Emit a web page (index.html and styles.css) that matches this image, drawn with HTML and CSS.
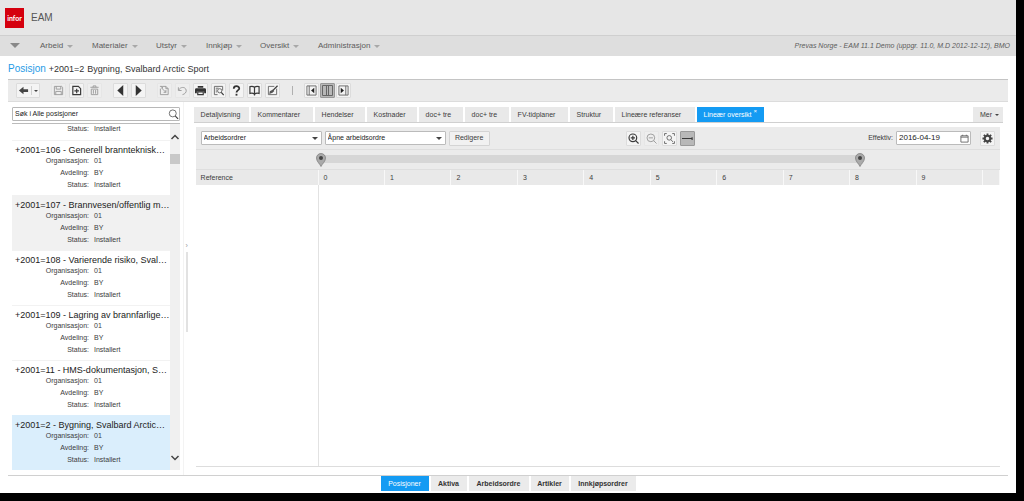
FILE: index.html
```html
<!DOCTYPE html>
<html lang="no">
<head>
<meta charset="utf-8">
<title>Infor EAM - Posisjon</title>
<link rel="stylesheet" href="styles.css">
</head>
<body>
<div class="app">
  <header class="brand"><span class="logo">infor</span><span class="product">EAM</span></header>
  <nav class="menu">
    <button class="menu-home" aria-label="Meny"><i class="caret caret-big"></i></button>
    <button class="menu-item m1">Arbeid<i class="caret"></i></button>
    <button class="menu-item m2">Materialer<i class="caret"></i></button>
    <button class="menu-item m3">Utstyr<i class="caret"></i></button>
    <button class="menu-item m4">Innkjøp<i class="caret"></i></button>
    <button class="menu-item m5">Oversikt<i class="caret"></i></button>
    <button class="menu-item m6">Administrasjon<i class="caret"></i></button>
    <span class="session">Prevas Norge - EAM 11.1 Demo (uppgr. 11.0, M.D 2012-12-12), BMO</span>
  </nav>
  <div class="heading"><h1>Posisjon</h1><span class="code">+2001=2</span><span>Bygning, Svalbard Arctic Sport</span></div>
  <div class="toolbar">
    <button class="tool back" aria-label="Tilbake"><svg class="ico" viewBox="0 0 12 12"><path d="M1 6l5-4v2.500h5v3H6V10z" fill="#444"/></svg><i class="split"></i><i class="caret caret-dark"></i></button>
    <div class="group">
      <button class="tool off" aria-label="Lagre"><svg class="ico" viewBox="0 0 12 12"><path d="M1.500 1.500h8l1 1v8h-9zM3.500 1.500v3h5v-3M3 10.500V7h6v3.500" class="ln"/></svg></button>
      <button class="tool" aria-label="Ny"><svg class="ico" viewBox="0 0 12 12"><path d="M2 1.500h6l2.500 2.500v6.500H2z" class="ln bold"/><path d="M6.200 4v5M3.700 6.500h5" class="ln bold"/></svg></button>
      <button class="tool off" aria-label="Slett"><svg class="ico" viewBox="0 0 12 12"><path d="M1.500 2.500h9M4.500 2.500v-1.500h3v1.500M2.500 4.500h7v6h-7zM4.800 5.500v4M7.200 5.500v4" class="ln"/></svg></button>
    </div>
    <div class="group">
      <button class="tool" aria-label="Forrige"><svg class="ico" viewBox="0 0 12 12"><path d="M9 0v12L2.500 6z" fill="#333"/></svg></button>
      <button class="tool" aria-label="Neste"><svg class="ico" viewBox="0 0 12 12"><path d="M3 0v12l6.500-6z" fill="#333"/></svg></button>
    </div>
    <div class="group">
      <button class="tool off" aria-label="Kopier"><svg class="ico" viewBox="0 0 12 12"><path d="M1.500 4V10.500h8.500V4L7.500 1.500H4M7.500 1.500V4H10M1 1.500h2.500V4M3.500 1.500l0 2.500 4 4M7.500 5.500V8H5" class="ln"/></svg></button>
      <button class="tool off" aria-label="Angre"><svg class="ico" viewBox="0 0 12 12"><path d="M1.500 2.500v3.500H5M1.800 5.500C3.500 2 9 1.500 10 5.500c.5 2.500-1.500 4.500-4 5" class="ln"/></svg></button>
      <button class="tool" aria-label="Skriv ut"><svg class="ico" viewBox="0 0 12 12"><path d="M3 1h6v2H3zM1.500 3.500h9Q12 3.500 12 5v4h-2V7H2v2H0V5Q0 3.500 1.500 3.500z" fill="#333"/><path d="M3 7.500h6v3H3z" class="ln bold"/></svg></button>
      <button class="tool" aria-label="Forhåndsvis"><svg class="ico" viewBox="0 0 12 12"><path d="M5 10.500H1.500v-9h9V6M3 3.500h3M3 5.500h1.500M3 7.500h1.500" class="ln mid"/><circle cx="7.300" cy="6.300" r="2.300" class="ln mid"/><path d="M9 8l2.700 3" class="ln bold"/></svg></button>
      <button class="tool" aria-label="Hjelp"><svg class="ico" viewBox="0 0 12 12"><path d="M3 4C3 .5 9 .5 9 3.700 9 5.700 6 5.500 6 8.300" fill="none" stroke="#333" stroke-width="1.900"/><path d="M5 9.600h2v2H5z" fill="#333"/></svg></button>
      <button class="tool" aria-label="Dokumentasjon"><svg class="ico" viewBox="0 0 12 12"><path d="M6 2.500C4.500 1.200 2.500 1.300 1 1.800v7.500c1.500-.5 3.500-.5 5 .7 1.500-1.200 3.500-1.200 5-.7V1.800C9.500 1.300 7.500 1.200 6 2.500zV11.500" class="ln bold"/></svg></button>
      <button class="tool" aria-label="Rediger skjerm"><svg class="ico" viewBox="0 0 12 12"><path d="M8 1.500H1.500v9h9V4" class="ln mid"/><path d="M11.500.8L6 6.500" class="ln bold"/><path d="M6.500 5L3 6.800 2.500 9.800 6 8.500 8 6.500z" fill="#555"/></svg></button>
    </div>
    <i class="divider"></i>
    <div class="group tight">
      <button class="tool" aria-label="Kun liste"><svg class="ico" viewBox="0 0 12 12"><path d="M1 1h10v10H1zM3.500 1v10" class="ln mid"/><path d="M9 3v6L5.500 6z" fill="#222"/></svg></button>
      <button class="tool on" aria-label="Delt visning"><svg class="ico" viewBox="0 0 11 11"><path d="M.5.5h10v10H.5zM4.500.5v10M6.500.5v10" class="ln mid"/></svg></button>
      <button class="tool" aria-label="Kun detaljer"><svg class="ico" viewBox="0 0 12 12"><path d="M1 1h10v10H1zM8.500 1v10" class="ln mid"/><path d="M3 3v6l3.500-3z" fill="#222"/></svg></button>
    </div>
  </div>

  <div class="work">
    <aside class="side">
      <div class="search">
        <input type="text" value="Søk i Alle posisjoner" aria-label="Søk i Alle posisjoner">
        <button aria-label="Søk"><svg class="ico" viewBox="0 0 12 12"><circle cx="5.200" cy="4.800" r="3.800" class="ln mid"/><path d="M8 7.800l3 3" class="ln bold"/></svg></button>
      </div>
      <div class="listbox">
        <div class="list">
          <article class="row tail"><dl><dt>Status:</dt><dd>Installert</dd></dl></article>
          <article class="row"><h2>+2001=106 - Generell brannteknisk…</h2><dl><dt>Organisasjon:</dt><dd>01</dd><dt>Avdeling:</dt><dd>BY</dd><dt>Status:</dt><dd>Installert</dd></dl></article>
          <article class="row shade"><h2>+2001=107 - Brannvesen/offentlig m…</h2><dl><dt>Organisasjon:</dt><dd>01</dd><dt>Avdeling:</dt><dd>BY</dd><dt>Status:</dt><dd>Installert</dd></dl></article>
          <article class="row"><h2>+2001=108 - Varierende risiko, Sval…</h2><dl><dt>Organisasjon:</dt><dd>01</dd><dt>Avdeling:</dt><dd>BY</dd><dt>Status:</dt><dd>Installert</dd></dl></article>
          <article class="row"><h2>+2001=109 - Lagring av brannfarlige…</h2><dl><dt>Organisasjon:</dt><dd>01</dd><dt>Avdeling:</dt><dd>BY</dd><dt>Status:</dt><dd>Installert</dd></dl></article>
          <article class="row"><h2>+2001=11 - HMS-dokumentasjon, S…</h2><dl><dt>Organisasjon:</dt><dd>01</dd><dt>Avdeling:</dt><dd>BY</dd><dt>Status:</dt><dd>Installert</dd></dl></article>
          <article class="row picked"><h2>+2001=2 - Bygning, Svalbard Arctic…</h2><dl><dt>Organisasjon:</dt><dd>01</dd><dt>Avdeling:</dt><dd>BY</dd><dt>Status:</dt><dd>Installert</dd></dl></article>
        </div>
        <div class="scroll">
          <svg class="chev" viewBox="0 0 10 8"><path d="M1.500 6L5 2.500 8.500 6"/></svg>
          <i class="thumb"></i>
          <svg class="chev last" viewBox="0 0 10 8"><path d="M1.500 2L5 5.500 8.500 2"/></svg>
        </div>
      </div>
    </aside>
    <div class="splitter"><span>›</span><i></i></div>
    <main class="detail">
      <div class="tabs">
        <button class="tab t55">Detaljvisning</button>
        <button class="tab t62">Kommentarer</button>
        <button class="tab t50">Hendelser</button>
        <button class="tab t50">Kostnader</button>
        <button class="tab t44">doc+ tre</button>
        <button class="tab t44">doc+ tre</button>
        <button class="tab t57">FV-tidplaner</button>
        <button class="tab t43">Struktur</button>
        <button class="tab t80">Lineære referanser</button>
        <button class="tab t67 current">Lineær oversikt<sup>×</sup></button>
        <button class="tab more">Mer<i class="caret caret-dark"></i></button>
      </div>
      <section class="panel">
        <div class="filters">
          <label class="pick"><select aria-label="Type"><option>Arbeidsordrer</option></select><i class="caret caret-dark"></i></label>
          <label class="pick"><select aria-label="Filter"><option>Åpne arbeidsordre</option></select><i class="caret caret-dark"></i></label>
          <button class="edit">Redigere</button>
          <div class="zooms">
            <button class="tool" aria-label="Zoom inn"><svg class="ico" viewBox="0 0 12 12"><circle cx="5.300" cy="5.300" r="4.200" class="ln bold"/><path d="M5.300 3v4.600M3 5.300h4.600M8.300 8.300l3.200 3.200" class="ln bold"/></svg></button>
            <button class="tool off" aria-label="Zoom ut"><svg class="ico" viewBox="0 0 12 12"><circle cx="5.300" cy="5.300" r="4.200" class="ln"/><path d="M3 5.300h4.600M8.300 8.300l3.200 3.200" class="ln"/></svg></button>
            <button class="tool" aria-label="Tilpass"><svg class="ico" viewBox="0 0 12 12"><path d="M.6 3V.6H3M9 .6h2.400V3M.6 9v2.400H3M11.400 9v2.400H9" class="ln mid"/><circle cx="5.700" cy="5.300" r="2.500" class="ln mid"/><path d="M7.500 7.200l2.200 2.500" class="ln mid"/></svg></button>
            <button class="tool on" aria-label="Linje"><svg class="ico" viewBox="0 0 12 12"><path d="M0 6h11M11 4.500v3" class="ln bold"/></svg></button>
          </div>
          <label class="date-label" for="eff">Effektiv:</label>
          <div class="date"><input id="eff" type="text" value="2016-04-19"><button aria-label="Kalender"><svg class="cal" viewBox="0 0 10 10"><path d="M1 2h8v7H1zM1 3.500h8M3 .8v1.500M7 .8v1.500" class="ln mid"/></svg></button></div>
          <button class="tool gear" aria-label="Innstillinger"><svg class="ico" viewBox="0 0 12 12"><circle cx="6" cy="6" r="3" fill="none" stroke="#444" stroke-width="2.200"/><path d="M6 .5v2M6 9.500v2M.5 6h2M9.500 6h2M2 2l1.500 1.500M8.500 8.500L10 10M10 2L8.500 3.500M3.500 8.500L2 10" fill="none" stroke="#444" stroke-width="2"/></svg></button>
        </div>
        <div class="range">
          <div class="track">
            <svg class="pin" viewBox="0 0 10 14"><path d="M5 13.500C4 11 .5 8.500.5 5a4.500 4.500 0 019 0C9.500 8.500 6 11 5 13.500z" fill="#aaa" stroke="#808080" stroke-width=".8"/><circle cx="5" cy="5" r="2" fill="#444"/></svg>
            <svg class="pin end" viewBox="0 0 10 14"><path d="M5 13.500C4 11 .5 8.500.5 5a4.500 4.500 0 019 0C9.500 8.500 6 11 5 13.500z" fill="#aaa" stroke="#808080" stroke-width=".8"/><circle cx="5" cy="5" r="2" fill="#444"/></svg>
          </div>
        </div>
        <div class="scale"><span class="ref">Reference</span><span>0</span><span>1</span><span>2</span><span>3</span><span>4</span><span>5</span><span>6</span><span>7</span><span>8</span><span>9</span><span></span></div>
        <div class="chart"><div class="names"></div><div></div></div>
      </section>
    </main>
  </div>
  <footer class="bottom">
    <button class="btab w48 current">Posisjoner</button>
    <button class="btab w36">Aktiva</button>
    <button class="btab w60">Arbeidsordre</button>
    <button class="btab w38">Artikler</button>
    <button class="btab w65">Innkjøpsordrer</button>
  </footer>
</div>
</body>
</html>
```
FILE: styles.css
```css
* { box-sizing: border-box; }
body { margin: 0; background: #000; color: #3c3c3c; font: 7px/12px "Liberation Sans", Arial, sans-serif; }
button, input, select { font: inherit; color: inherit; margin: 0; padding: 0; border: 0; background: none; }
button { white-space: nowrap; }
h1, h2, dl, dd { margin: 0; font-weight: normal; }
svg { display: block; }

.app { display: flex; flex-direction: column; height: calc(100vh - 8px); margin-right: 8px; background: #fff; }

.brand { display: flex; align-items: center; gap: 7px; flex: 0 0 35px; padding-left: 5px; background: #e6e6e6; }
.logo { display: flex; align-items: center; justify-content: center; width: 19px; height: 20px; background: #d5000e; color: #fff; font: bold 7px/12px Lato, sans-serif; }
.product { font-size: 10px; color: #555; }

.menu { display: flex; align-items: center; flex: 0 0 21px; padding: 0 6px 0 10px; background: #dedede; border-top: 1px solid #cfcfcf; color: #5c5c5c; font-size: 8px; }
.menu-home { width: 30px; text-align: left; }
.menu-item { display: flex; align-items: center; gap: 4px; }
.m1 { width: 52px; }
.m2 { width: 64px; }
.m3 { width: 50px; }
.m4 { width: 54px; }
.m5 { width: 58px; }
.session { margin-left: auto; font-size: 7px; font-style: italic; }
.caret { display: inline-block; border: 3px solid transparent; border-top: 3px solid #a8a8a8; border-bottom: 0; }
.caret-big { border-width: 5px; border-top: 5px solid #888; border-bottom: 0; }
.caret-dark { border-top-color: #444; }

.heading { display: flex; align-items: center; flex: 0 0 23px; padding: 2px 0 0 8px; font-size: 9px; color: #333; }
.heading h1 { font-size: 10px; color: #1f9be6; }
.code { margin: 0 3px; }

.toolbar { display: flex; align-items: center; flex: 0 0 23px; margin: 0 8px; padding-left: 8px; background: #ebebeb; border-top: 1px solid #c4c4c4; border-bottom: 1px solid #dcdcdc; }
.group { display: flex; gap: 3px; margin-left: 11px; }
.tight { gap: 1px; }
.tool { display: flex; align-items: center; justify-content: center; width: 15px; height: 15px; background: #f4f4f4; border: 1px solid #dcdcdc; border-radius: 1px; }
.tool.off { border-color: #e6e6e6; background: #eee; }
.tool.on { background: #b8b8b8; border-color: #999; }
.tool.back { width: 24px; gap: 2px; }
.back .caret { border-width: 2px; border-bottom: 0; }
.split { width: 1px; height: 9px; background: #d0d0d0; }
.divider { width: 1px; height: 9px; margin-left: 12px; background: #b0b0b0; }
.ico { width: 11px; height: 11px; flex: none; }
.ln { fill: none; stroke: #999; stroke-width: 1; }
.ln.mid { stroke: #666; }
.ln.bold { stroke: #3a3a3a; stroke-width: 1.3; }

.work { display: flex; flex: 1; min-height: 0; margin: 0 8px; border-bottom: 1px solid #d0d0d0; }
.side { display: flex; flex-direction: column; flex: 0 0 171px; padding: 5px 0 5px 4px; }
.search { display: flex; align-items: center; flex: 0 0 14px; border: 1px solid #b8b8b8; border-radius: 1px; }
.search input { flex: 1; min-width: 0; padding-left: 2px; height: 12px; color: #222; }
.listbox { display: flex; flex: 1; min-height: 0; margin-top: 2px; border-top: 1px solid #bbb; }
.list { display: flex; flex-direction: column; justify-content: flex-end; flex: 1; min-width: 0; }
.row { flex: 0 0 55px; padding: 3px 0 0 3px; border-top: 1px solid #f2f2f2; }
.row h2 { white-space: nowrap; font-size: 9px; line-height: 12px; color: #222; }
.row dl { display: grid; grid-template-columns: 74px 1fr; column-gap: 5px; margin-top: -1px; line-height: 12px; }
.row dt { text-align: right; }
.row.tail { flex-basis: 16px; padding-top: 0; border: 0; }
.shade { background: #f1f1f1; border-color: #f1f1f1; }
.picked { background: #daeefc; border-color: #daeefc; }
.scroll { display: flex; flex-direction: column; flex: 0 0 10px; background: #f0f0f0; padding: 9px 0 8px; }
.chev { width: 10px; height: 8px; fill: none; stroke: #444; stroke-width: 1.5; }
.last { margin-top: auto; }
.thumb { height: 10px; margin-top: 13px; background: #c8c8c8; }
.splitter { display: flex; flex-direction: column; align-items: center; flex: 0 0 7px; margin-left: 3px; padding: 138px 0 0; border-left: 1px solid #f3f3f3; color: #999; }
.splitter i { width: 2px; height: 80px; background: #e2e2e2; }

.detail { display: flex; flex-direction: column; flex: 1; min-width: 0; padding: 5px 5px 8px 4px; }
.tabs { display: flex; gap: 2px; flex: 0 0 16px; border-bottom: 1px solid #d0d0d0; }
.tab { height: 15px; padding-left: 7px; text-align: left; background: #e9e9e9; }
.t43 { width: 43px; }
.t44 { width: 44px; }
.t50 { width: 50px; }
.t55 { width: 55px; }
.t57 { width: 57px; }
.t62 { width: 62px; }
.t67 { width: 67px; }
.t80 { width: 80px; }
.current { background: #149bf3; color: #fff; }
.tab sup { margin-left: 2px; font-size: 6px; line-height: 1px; }
.more { display: flex; align-items: center; gap: 3px; width: 30px; margin-left: auto; }
.more .caret { border-width: 2px; border-bottom: 0; }

.panel { display: flex; flex-direction: column; flex: 1; margin: 4px 3px 0 2px; border-bottom: 1px solid #ddd; }
.filters { display: flex; align-items: center; gap: 3px; flex: 0 0 23px; padding: 0 5px; background: #ebebeb; border-bottom: 1px solid #dedede; }
.pick { display: flex; align-items: center; width: 121px; height: 14px; padding-right: 3px; background: #fff; border: 1px solid #bbb; border-radius: 1px; color: #222; }
.pick select { appearance: none; flex: 1; height: 12px; padding-left: 2px; }
.edit { width: 41px; height: 15px; background: #f1f1f1; border: 1px solid #d4d4d4; border-radius: 1px; }
.zooms { display: flex; gap: 3px; margin-left: auto; }
.date-label { margin-left: auto; padding-left: 36px; }
.date { display: flex; align-items: center; width: 75px; height: 14px; background: #fff; border: 1px solid #bbb; border-radius: 1px; color: #222; font-size: 8px; }
.date input { flex: 1; min-width: 0; height: 12px; padding-left: 2px; }
.date button { padding-right: 1px; }
.cal { width: 9px; height: 9px; }
.gear { margin-left: 6px; }

.range { flex: 0 0 19px; padding: 5px 140px 0 125px; background: #ebebeb; }
.track { position: relative; height: 8px; background: #d6d6d6; }
.pin { position: absolute; left: -5px; top: -2px; width: 10px; height: 14px; }
.pin.end { left: auto; right: -5px; }
.scale { display: grid; grid-template-columns: 123px repeat(10, 1fr) 17px; flex: 0 0 16px; background: #e9e9e9; border-top: 1px solid #dedede; }
.scale span { padding: 2px 0 0 5px; border-right: 1px solid #f8f8f8; }
.chart { display: grid; grid-template-columns: 123px 1fr; flex: 1; }
.names { border-right: 1px solid #e2e2e2; }

.bottom { display: flex; justify-content: center; gap: 2px; flex: 0 0 17px; }
.btab { height: 15px; background: #ebebeb; font-weight: bold; color: #333; }
.btab.current { background: #149bf3; color: #fff; font-weight: normal; }
.w36 { width: 36px; }
.w38 { width: 38px; }
.w48 { width: 48px; }
.w60 { width: 60px; }
.w65 { width: 65px; }
```
